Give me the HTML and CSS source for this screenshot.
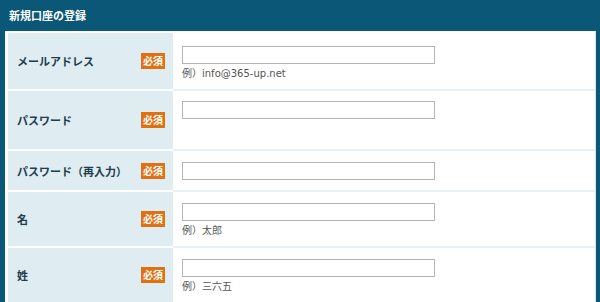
FILE: index.html
```html
<!DOCTYPE html>
<html lang="ja">
<head>
  <meta charset="UTF-8">
  <meta name="viewport" content="width=device-width, initial-scale=1.0">
  <title>新規口座の登録</title>
  <link rel="stylesheet" href="styles.css">
</head>
<body>
  <div class="entry-box" id="account_entry">
    <h2 class="entry-box__title">新規口座の登録</h2>
    <div class="entry-box__main">
      <div class="entry-row entry-row--first">
        <div class="entry-row__label">
          <span class="entry-text">メールアドレス</span>
          <span class="entry-badge">必須</span>
        </div>
        <div class="entry-row__field">
          <input class="entry-input" type="text" value="">
          <div class="entry-hint">例）info@365-up.net</div>
        </div>
      </div>
      <div class="entry-row entry-row--tall">
        <div class="entry-row__label">
          <span class="entry-text">パスワード</span>
          <span class="entry-badge">必須</span>
        </div>
        <div class="entry-row__field">
          <input class="entry-input" type="password" value="">
        </div>
      </div>
      <div class="entry-row entry-row--short">
        <div class="entry-row__label">
          <span class="entry-text">パスワード（再入力）</span>
          <span class="entry-badge">必須</span>
        </div>
        <div class="entry-row__field">
          <input class="entry-input" type="password" value="">
        </div>
      </div>
      <div class="entry-row">
        <div class="entry-row__label">
          <span class="entry-text">名</span>
          <span class="entry-badge">必須</span>
        </div>
        <div class="entry-row__field">
          <input class="entry-input" type="text" value="">
          <div class="entry-hint">例）太郎</div>
        </div>
      </div>
      <div class="entry-row">
        <div class="entry-row__label">
          <span class="entry-text">姓</span>
          <span class="entry-badge">必須</span>
        </div>
        <div class="entry-row__field">
          <input class="entry-input" type="text" value="">
          <div class="entry-hint">例）三六五</div>
        </div>
      </div>
    </div>
  </div>
</body>
</html>
```

FILE: styles.css
```css
/* General styles */
body {
  margin: 0;
  background: #fff;
  font-family: "Noto Sans CJK JP", "DejaVu Sans", sans-serif;
}

#account_entry.entry-box {
  width: 600px;
  height: 302px;
  box-sizing: border-box;
  background: #0b5777;
  padding: 0 4px 0 5px;
  overflow: hidden;
}

#account_entry .entry-box__title {
  margin: 0;
  height: 31px;
  line-height: 31px;
  padding-left: 4px;
  font-size: 11px;
  font-weight: bold;
  color: #fff;
}

#account_entry .entry-box__main {
  background: #fff;
  border-right: 1px solid #d8e6ee;
  padding: 2px 0 0 3px;
  height: 100%;
}

#account_entry .entry-row {
  display: flex;
}

#account_entry .entry-row__label {
  width: 165px;
  flex: 0 0 165px;
  box-sizing: border-box;
  margin-bottom: 2px;
  padding: 0 8px 0 9px;
  background: #dfecf2;
  display: flex;
  justify-content: space-between;
  align-items: center;
}

#account_entry .entry-text {
  font-size: 11px;
  font-weight: bold;
  color: #1d3c4c;
}

#account_entry .entry-badge {
  width: 24px;
  height: 16px;
  line-height: 16px;
  text-align: center;
  background: #e07012;
  color: #fff;
  font-size: 10px;
  font-weight: bold;
}

#account_entry .entry-row__field {
  flex: 1;
  padding: 11px 0 8px 9px;
  border-bottom: 2px solid #e6f1f7;
}

#account_entry .entry-row--first .entry-row__field {
  padding-top: 13px;
}

#account_entry .entry-row--tall .entry-row__field {
  padding: 10px 0 30px 9px;
}

#account_entry .entry-row--short .entry-row__field {
  padding: 11px 0 10px 9px;
}

#account_entry .entry-input {
  display: block;
  width: 253px;
  height: 18px;
  box-sizing: border-box;
  margin: 0;
  padding: 0 3px;
  border: 1px solid #b4b4b4;
  border-radius: 0;
  outline: 0;
  background: #fff;
}

#account_entry .entry-hint {
  margin-top: 3px;
  line-height: 14px;
  font-family: "DejaVu Sans", "Noto Sans CJK JP", sans-serif;
  font-size: 10px;
  color: #555;
}
```
